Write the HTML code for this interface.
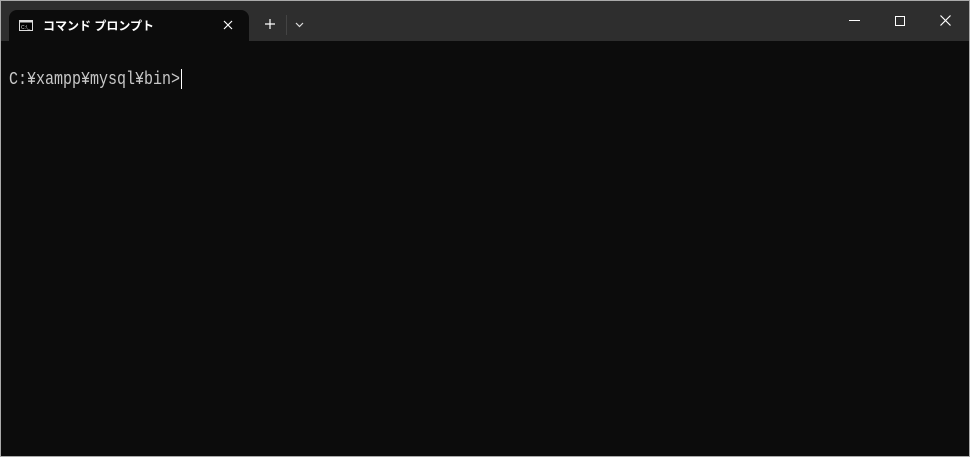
<!DOCTYPE html>
<html><head><meta charset="utf-8"><style>
html,body{margin:0;padding:0;}
body{width:970px;height:457px;background:#aaa;position:relative;overflow:hidden;}
.win{position:absolute;left:1px;top:1px;width:968px;height:455px;background:#0c0c0c;}
.title{position:absolute;left:0;top:0;width:968px;height:40px;background:#2e2e2e;}
.tab{position:absolute;left:8px;top:9px;width:240px;height:31px;background:#0c0c0c;border-radius:8px 8px 0 0;}
.tabtext{position:absolute;left:34px;top:7px;color:#fff;font:bold 12px "Liberation Sans","Noto Sans CJK JP",sans-serif;}
.term{position:absolute;left:8px;top:68px;color:#c8c8c8;font:15px "Liberation Mono","Noto Sans CJK JP",monospace;transform:scaleY(1.25);transform-origin:0 0;}
.cur{position:absolute;left:180px;top:68px;width:1px;height:20px;background:#fff;}
svg{position:absolute;}
</style></head><body><div class="win">
<div class="title">
<div class="tab">
<svg style="left:10px;top:10px" width="14" height="11" viewBox="0 0 14 11"><rect x="0.5" y="0.5" width="13" height="10" fill="#000" stroke="#ddd"/><rect x="0.5" y="0.5" width="13" height="2" fill="#ddd"/><text x="2" y="9" font-size="5" fill="#ddd" font-family="Liberation Sans">C:\_</text></svg>
<div class="tabtext">コマンド プロンプト</div>
<svg style="left:214px;top:10px" width="10" height="10" viewBox="0 0 10 10"><path d="M1 1L9 9M9 1L1 9" stroke="#fff" stroke-width="1.2"/></svg>
</div>
<svg style="left:263px;top:17px" width="12" height="12" viewBox="0 0 12 12"><path d="M6 1V11M1 6H11" stroke="#fff" stroke-width="1.2"/></svg>
<div style="position:absolute;left:285px;top:14px;width:1px;height:20px;background:#444"></div>
<svg style="left:294px;top:21px" width="9" height="6" viewBox="0 0 9 6"><path d="M1 1L4.5 4.5L8 1" stroke="#ddd" stroke-width="1.2" fill="none"/></svg>
<div style="position:absolute;left:848px;top:19px;width:11px;height:1px;background:#fff"></div>
<div style="position:absolute;left:894px;top:15px;width:8px;height:8px;border:1px solid #fff"></div>
<svg style="left:939px;top:14px" width="11" height="11" viewBox="0 0 11 11"><path d="M0.5 0.5L10.5 10.5M10.5 0.5L0.5 10.5" stroke="#fff" stroke-width="1.2"/></svg>
</div>
<div class="term">C:¥xampp¥mysql¥bin&gt;</div>
<div class="cur"></div>
</div></body></html>
